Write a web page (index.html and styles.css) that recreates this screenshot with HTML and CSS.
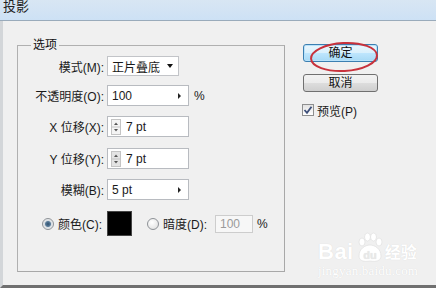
FILE: index.html
```html
<!DOCTYPE html>
<html lang="zh-CN">
<head>
<meta charset="utf-8">
<title>投影</title>
<link rel="stylesheet" href="styles.css">
</head>
<body>
<div class="window">
  <div class="titlebar"><span class="title">投影</span></div>
  <div class="main">
    <fieldset class="group">
      <legend class="legend">选项</legend>
      <div class="row">
        <span class="label">模式(M):</span>
        <div class="select"><span class="value">正片叠底</span><span class="dropdown"></span></div>
      </div>
      <div class="row row-opacity">
        <span class="label">不透明度(O):</span>
        <div class="field"><span class="value">100</span><span class="arrow-right"></span></div>
        <span class="unit">%</span>
      </div>
      <div class="row row-x">
        <span class="label">X 位移(X):</span>
        <div class="field">
          <svg class="spinner" width="10" height="16" viewBox="0 0 10 16">
            <rect x="0.5" y="0.5" width="9" height="15" fill="#f4f4f4" stroke="#c4c4c4"/>
            <line x1="1" y1="8" x2="9" y2="8" stroke="#c4c4c4"/>
            <path d="M3 6 L5 3.5 L7 6 Z" fill="#555"/>
            <path d="M3 10 L5 12.5 L7 10 Z" fill="#555"/>
          </svg>
          <span class="value">7 pt</span>
        </div>
      </div>
      <div class="row row-y">
        <span class="label">Y 位移(Y):</span>
        <div class="field">
          <svg class="spinner" width="10" height="16" viewBox="0 0 10 16">
            <rect x="0.5" y="0.5" width="9" height="15" fill="#e4e4e4" stroke="#c4c4c4"/>
            <line x1="1" y1="8" x2="9" y2="8" stroke="#c4c4c4"/>
            <path d="M3 6 L5 3.5 L7 6 Z" fill="#555"/>
            <path d="M3 10 L5 12.5 L7 10 Z" fill="#555"/>
          </svg>
          <span class="value">7 pt</span>
        </div>
      </div>
      <div class="row row-blur">
        <span class="label">模糊(B):</span>
        <div class="field"><span class="value">5 pt</span><span class="arrow-right"></span></div>
      </div>
      <div class="row row-color">
        <span class="label label-radio"><span class="radio radio-on"></span>颜色(C):</span>
        <span class="swatch"></span>
        <span class="radio radio-off"></span>
        <span class="label-dark">暗度(D):</span>
        <div class="field field-disabled"><span class="value">100</span></div>
        <span class="unit">%</span>
      </div>
    </fieldset>
    <div class="side">
      <div class="btn btn-default">确定</div>
      <div class="btn btn-normal">取消</div>
      <div class="check-row">
        <span class="checkbox">
          <svg width="10" height="10" viewBox="0 0 10 10"><path d="M1.5 5 L4 7.8 L8.5 1.8" fill="none" stroke="#3d4f7a" stroke-width="1.8"/></svg>
        </span>
        <span class="check-label">预览(P)</span>
      </div>
    </div>
  </div>
</div>
<svg class="annotation" width="76" height="40" viewBox="0 0 76 40">
  <ellipse cx="37" cy="19" rx="33" ry="14" fill="none" stroke="#c8323c" stroke-width="2" transform="rotate(-3 37 19)"/>
</svg>
<div class="watermark">
  <div class="wm-top">
    <span class="wm-bai">Bai</span>
    <svg class="wm-paw" width="30" height="32" viewBox="0 0 30 32">
      <g fill="#fff" stroke="#e0e0e0" stroke-width="0.7">
        <ellipse cx="7" cy="10" rx="3" ry="4"/>
        <ellipse cx="12.5" cy="5" rx="3" ry="4"/>
        <ellipse cx="18.5" cy="5" rx="3" ry="4"/>
        <ellipse cx="24" cy="10" rx="3" ry="4"/>
        <path d="M4 24 C4 17 10 13 15 13 C20 13 26 17 26 24 C26 29 21 30 15 29 C9 30 4 29 4 24 Z"/>
      </g>
      <text x="15" y="27" text-anchor="middle" class="wm-du">du</text>
    </svg>
    <span class="wm-jy">经验</span>
  </div>
  <div class="wm-url">jingyan.baidu.com</div>
</div>
</body>
</html>
```

FILE: styles.css
```css
* { box-sizing: border-box; }
html, body { margin: 0; padding: 0; }
body {
  width: 436px;
  height: 288px;
  overflow: hidden;
  position: relative;
  background: #f0f0f0;
  font-family: "Liberation Sans", "Noto Sans CJK SC", sans-serif;
  font-size: 12px;
  color: #1a1a1a;
}
.window { display: flex; flex-direction: column; height: 288px; }
.titlebar {
  height: 21px;
  flex: none;
  border-bottom: 1px solid #9aabbb;
  background: linear-gradient(#d8e6f3, #cde1f5);
  padding-left: 3px;
}
.title { display: block; font-size: 13px; line-height: 14px; color: #222; }
.main {
  flex: 1;
  display: flex;
  align-items: flex-start;
  border-left: 3px solid #d3d6d9;
  border-bottom: 3px solid #707070;
}
.group {
  margin: 16px 0 0 14px;
  padding: 3px 0 0 0;
  width: 268px;
  height: 235px;
  min-width: 0;
  border: 1px solid #b0b0b0;
  border-right-color: #a8a8a8;
  border-bottom-color: #a8a8a8;
}
.legend {
  margin-left: 13px;
  padding: 0 2px;
  font-size: 12px;
  line-height: 16px;
  color: #111;
}
.row { display: flex; align-items: center; height: 20px; }
.row-opacity { margin-top: 9px; height: 21px; }
.row-x { margin-top: 10px; height: 21px; }
.row-y { margin-top: 11px; height: 21px; }
.row-blur { margin-top: 10px; height: 21px; }
.row-color { margin-top: 11px; height: 25px; }
.label {
  width: 86px;
  margin-right: 3px;
  text-align: right;
  white-space: nowrap;
}
.label-radio { display: flex; align-items: center; justify-content: flex-end; padding-right: 2px; }
.select {
  width: 72px;
  height: 20px;
  border: 1px solid #c2c4c8;
  background: #fff;
  display: flex;
  align-items: center;
  justify-content: space-between;
  padding: 0 5px 0 4px;
}
.dropdown {
  width: 0; height: 0;
  border-left: 3.5px solid transparent;
  border-right: 3.5px solid transparent;
  border-top: 4px solid #111;
}
.field {
  width: 82px;
  height: 21px;
  border: 1px solid #b8bbc0;
  background: #fff;
  display: flex;
  align-items: center;
  padding: 0 7px 0 4px;
}
.field .value { flex: 1; }
.arrow-right {
  width: 0; height: 0;
  border-top: 3.5px solid transparent;
  border-bottom: 3.5px solid transparent;
  border-left: 3.5px solid #222;
}
.spinner { flex: none; margin: 0 5px 0 -1px; }
.unit { margin-left: 5px; }
.swatch {
  width: 25px;
  height: 25px;
  background: #000;
  border: 1px solid #444;
}
.radio {
  width: 12px;
  height: 12px;
  border-radius: 50%;
  border: 1px solid #8e9297;
  background: radial-gradient(circle at 40% 35%, #ffffff, #dcdcdc);
  flex: none;
}
.radio-on {
  margin-right: 4px;
  background: radial-gradient(circle, #2e4f6e 0, #5b7d9a 2.5px, #d8dde2 3.5px, #f4f4f4 6px);
}
.radio-off { margin-left: 15px; margin-right: 4px; }
.label-dark { white-space: nowrap; margin-right: 8px; }
.field-disabled {
  width: 38px;
  height: 18px;
  border-color: #cdcdcd;
  background: #f7f7f7;
  color: #9a9a9a;
  padding-left: 4px;
}
.row-color .unit { margin-left: 4px; }
.side {
  margin: 23px 0 0 18px;
  width: 75px;
  display: flex;
  flex-direction: column;
}
.btn {
  width: 75px;
  height: 18px;
  border-radius: 3px;
  text-align: center;
  line-height: 16px;
  font-size: 12px;
  color: #111;
}
.btn-default {
  border: 1px solid #3c7fb1;
  background: linear-gradient(#eaf6fd 0%, #d9f0fc 50%, #bee6fd 51%, #a7d9f5 100%);
  box-shadow: inset 0 0 0 1px #b9e2fa;
}
.btn-normal {
  margin-top: 12px;
  border: 1px solid #707070;
  background: linear-gradient(#f2f2f2 0%, #ebebeb 50%, #dddddd 51%, #cfcfcf 100%);
}
.check-row { margin-top: 10px; display: flex; align-items: center; height: 16px; }
.checkbox {
  width: 12px;
  height: 12px;
  margin-left: -1px;
  border: 1px solid #8e8f8f;
  background: linear-gradient(#e2e2e2, #ffffff);
  display: flex;
  align-items: center;
  justify-content: center;
}
.check-label { margin-left: 3px; }
.annotation { position: absolute; left: 307px; top: 38px; }
.watermark {
  position: absolute;
  left: 318px;
  top: 232px;
  color: #ffffff;
  text-shadow: 0 0 1px rgba(0,0,0,0.12);
}
.wm-top { display: flex; align-items: flex-end; height: 32px; }
.wm-bai { font-family: "Liberation Sans", sans-serif; font-weight: bold; font-size: 22px; line-height: 24px; letter-spacing: 0.5px; }
.wm-paw { margin-left: 1px; }
.wm-du { font-family: "Liberation Sans", sans-serif; font-weight: bold; font-size: 11px; fill: #e8e8e8; }
.wm-jy { font-size: 16px; line-height: 22px; font-weight: bold; }
.wm-url { font-family: "Liberation Serif", serif; font-size: 13px; line-height: 14px; margin-top: 0; letter-spacing: 0.2px; }
```
